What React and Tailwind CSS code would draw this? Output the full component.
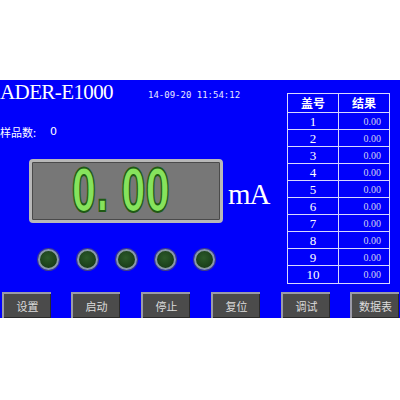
const rows = [1, 2, 3, 4, 5, 6, 7, 8, 9, 10];
const buttons = ["设置", "启动", "停止", "复位", "调试", "数据表"];
const btnX = ["ml-[2px]", "ml-[20px]", "ml-[21px]", "ml-[21px]", "ml-[21px]", "ml-[20px]"];

function Lamp() {
  return (
    <div className="h-[21px] w-[21px] rounded-full border-2 border-[#8a9aa8] bg-[radial-gradient(circle_at_45%_40%,#2c5a2a,#123312)] shadow-[0_0_0_1px_#3a3a8a]" />
  );
}

export default function App() {
  return (
    <div className="h-[400px] w-[400px] bg-white" style={{ fontFamily: '"Liberation Serif", "Noto Sans CJK SC", serif' }}>
      <div className="h-[80px]" />
      <div className="flex h-[238px] flex-col bg-[#0000fb] text-white">
        <div className="flex h-[213px]">
          <div className="w-[287px]">
            <div className="flex items-end">
              <span className="text-[21px] leading-[24px] tracking-[-0.6px]">ADER-E1000</span>
              <span className="ml-[35px] mb-[3px] text-[9px] leading-[12px] text-[#e8e8ff]" style={{ fontFamily: '"DejaVu Sans Mono", monospace' }}>14-09-20 11:54:12</span>
            </div>
            <div className="mt-[21px] flex items-center text-[11px] leading-[14px]" style={{ fontFamily: '"Noto Sans CJK SC", sans-serif' }}>
              <span>样品数:</span>
              <span className="ml-[14px]" style={{ fontFamily: '"DejaVu Sans", sans-serif' }}>0</span>
            </div>
            <div className="mt-[20px] flex items-center">
              <div className="ml-[29px] flex h-[64px] w-[194px] items-center justify-center rounded-[4px] border-[3px] border-[#b8b8b8] bg-[#777777] shadow-[inset_0_0_0_1px_#4a4a4a]">
                <span
                  className="-ml-[10px] scale-x-[0.6] text-[58px] font-bold leading-[58px] text-[#86e35c]"
                  style={{ fontFamily: '"DejaVu Sans", sans-serif', WebkitTextStroke: "2px #1f5a14" }}
                >
                  0. 00
                </span>
              </div>
              <span className="ml-[5px] mt-[6px] text-[29px] leading-[32px] tracking-[-1px]">mA</span>
            </div>
            <div className="mt-[26px] flex">
              <div className="ml-[38px] flex gap-[18px]">
                <Lamp />
                <Lamp />
                <Lamp />
                <Lamp />
                <Lamp />
              </div>
            </div>
          </div>
          <div className="mt-[13px] h-[191px] w-[103px] border border-[#d8d8ff]">
            <div className="flex h-[19px] border-b border-[#d8d8ff] text-[12px] font-bold leading-[18px]" style={{ fontFamily: '"Noto Sans CJK SC", serif' }}>
              <div className="w-[51px] border-r border-[#d8d8ff] text-center">盖号</div>
              <div className="flex-1 text-center">结果</div>
            </div>
            {rows.map((n) => (
              <div key={n} className={`flex h-[17px] ${n < 10 ? "border-b border-[#d8d8ff]" : ""}`}>
                <div className="w-[51px] border-r border-[#d8d8ff] text-center text-[13px] leading-[17px]">{n}</div>
                <div className="flex-1 pr-[8px] text-right text-[10px] leading-[17px] text-[#d0d0f0]">0.00</div>
              </div>
            ))}
          </div>
        </div>
        <div className="flex">
          {buttons.map((b, i) => (
            <div
              key={b}
              className={`${btnX[i]} flex h-[26px] w-[49px] items-center justify-center border-t-2 border-l-2 border-[#9a9aa8] bg-[#4b4b4b] text-[11px] text-[#dcdcdc] shadow-[inset_-1px_-1px_0_#2a2a2a]`}
              style={{ fontFamily: '"Noto Sans CJK SC", sans-serif' }}
            >
              {b}
            </div>
          ))}
        </div>
      </div>
    </div>
  );
}
